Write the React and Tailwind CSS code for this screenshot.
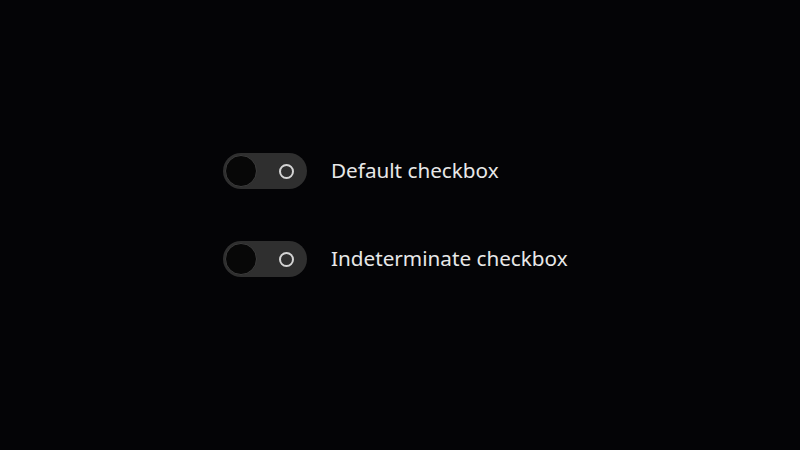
function Toggle() {
  return (
    <div className="relative flex h-[36px] w-[84px] items-center rounded-full bg-[#2f2f2f] px-[2px]">
      <div className="h-[32px] w-[32px] rounded-full border border-[#3c3c3c] bg-[#070707]" />
      <div className="ml-auto mr-[11px] h-[15px] w-[15px] rounded-full border-[2.5px] border-[#d4d4d4]" />
    </div>
  )
}

function Row({ label }) {
  return (
    <div className="flex items-center gap-[24px]">
      <Toggle />
      <span className="text-[20.7px] text-[#e8e8e8]">{label}</span>
    </div>
  )
}

export default function App() {
  return (
    <div
      className="flex h-[450px] w-[800px] flex-col gap-[52px] bg-[#040406] pl-[223px] pt-[153px]"
      style={{ fontFamily: '"Noto Sans", "Open Sans", sans-serif' }}
    >
      <Row label="Default checkbox" />
      <Row label="Indeterminate checkbox" />
    </div>
  )
}
